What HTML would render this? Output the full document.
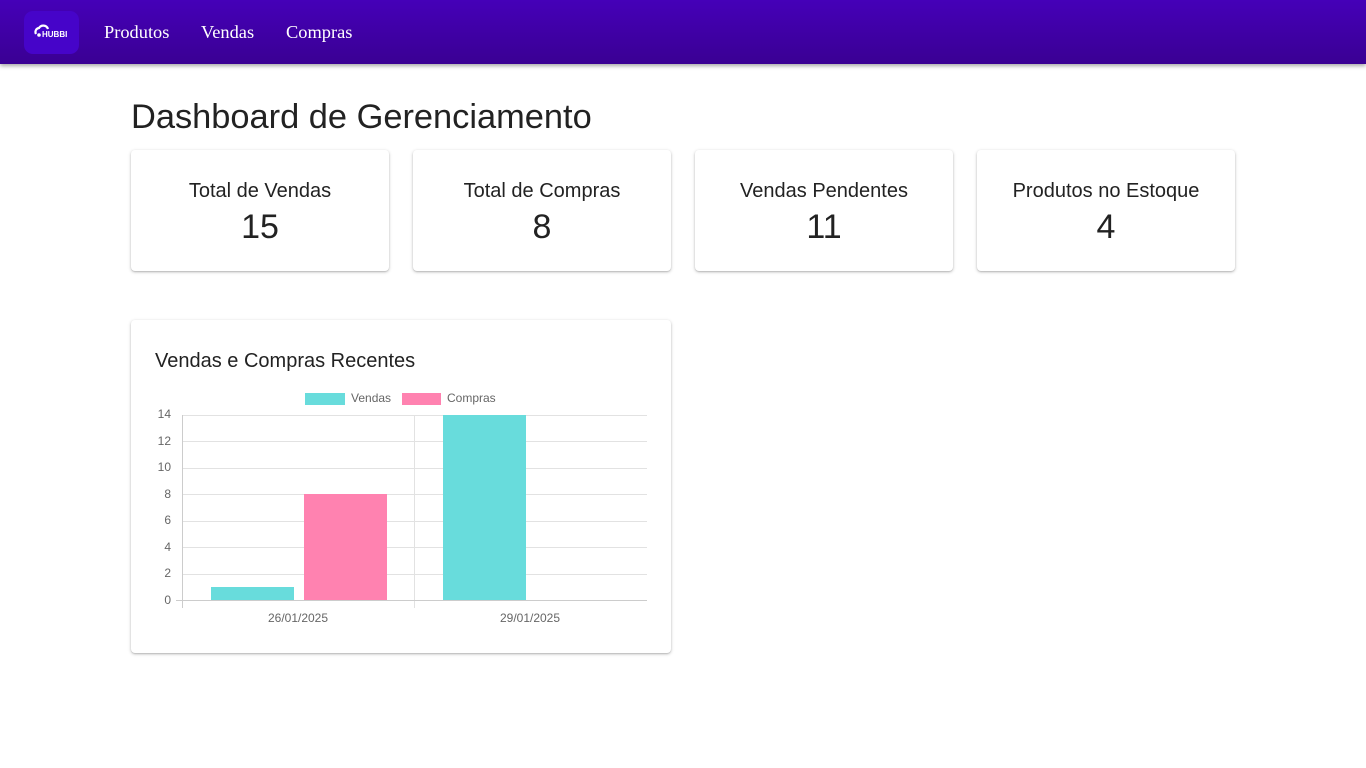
<!DOCTYPE html>
<html><head><meta charset="utf-8"><style>
*{margin:0;padding:0;box-sizing:border-box}
body{width:1366px;height:768px;background:#fff;font-family:"Liberation Sans",sans-serif;position:relative;overflow:hidden;color:#222}
.nav{position:absolute;left:0;top:0;width:1366px;height:64px;background:linear-gradient(#4500b8,#3a0093);box-shadow:0 2px 4px rgba(0,0,0,.35)}
.logo{position:absolute;left:24px;top:11px;width:55px;height:43px;border-radius:9px;background:#4604c9}
.nav a{position:absolute;top:22px;color:#fff;font-family:"Liberation Serif",serif;font-size:18.4px;text-decoration:none}
h1{position:absolute;left:131px;top:98px;font-size:34.4px;font-weight:400;color:#222}
.card{position:absolute;background:#fff;border-radius:4px;box-shadow:0 1px 3px rgba(0,0,0,.25),0 1px 1px rgba(0,0,0,.1)}
.card .t{position:absolute;top:30px;width:100%;text-align:center;font-size:20px}
.card .v{position:absolute;top:58px;width:100%;text-align:center;font-size:34px}
</style></head><body>
<div class="nav">
<div class="logo"><svg width="55" height="43" viewBox="0 0 55 43"><path d="M12 23 a4 4 0 0 1 3-6 a5 5 0 0 1 9 1" stroke="#fff" stroke-width="2.2" fill="none"/><circle cx="15" cy="24" r="1.8" fill="#fff"/><text x="18" y="26" fill="#fff" font-size="8" font-weight="bold" font-family="Liberation Sans">HUBBI</text></svg></div>
<a style="left:104px">Produtos</a><a style="left:201px">Vendas</a><a style="left:286px">Compras</a>
</div>
<h1>Dashboard de Gerenciamento</h1>
<div class="card" style="left:131px;top:150px;width:258px;height:121px"><div class="t">Total de Vendas</div><div class="v">15</div></div>
<div class="card" style="left:413px;top:150px;width:258px;height:121px"><div class="t">Total de Compras</div><div class="v">8</div></div>
<div class="card" style="left:695px;top:150px;width:258px;height:121px"><div class="t">Vendas Pendentes</div><div class="v">11</div></div>
<div class="card" style="left:977px;top:150px;width:258px;height:121px"><div class="t">Produtos no Estoque</div><div class="v">4</div></div>
<div class="card" style="left:131px;top:320px;width:540px;height:333px">
<div style="position:absolute;left:24px;top:30px;font-size:20px">Vendas e Compras Recentes</div>
</div>
<svg style="position:absolute;left:0;top:0" width="1366" height="768" font-family="Liberation Sans" font-size="12" fill="#666">
<g stroke="#e2e2e2" stroke-width="1">
<line x1="182" x2="647" y1="415.5" y2="415.5"/><line x1="182" x2="647" y1="441.5" y2="441.5"/><line x1="182" x2="647" y1="468.5" y2="468.5"/><line x1="182" x2="647" y1="494.5" y2="494.5"/><line x1="182" x2="647" y1="521.5" y2="521.5"/><line x1="182" x2="647" y1="547.5" y2="547.5"/><line x1="182" x2="647" y1="574.5" y2="574.5"/>
<line x1="414.5" x2="414.5" y1="415" y2="608"/>
</g>
<line x1="176" x2="647" y1="600.5" y2="600.5" stroke="#ccc"/>
<line x1="182.5" x2="182.5" y1="415" y2="608" stroke="#ccc"/>
<rect x="211" y="587" width="83" height="13" fill="#68dcdc"/>
<rect x="304" y="494" width="83" height="106" fill="#ff82b0"/>
<rect x="443" y="415" width="83" height="185" fill="#68dcdc"/>
<rect x="305" y="393" width="40" height="12" fill="#68dcdc"/><text x="351" y="402">Vendas</text>
<rect x="402" y="393" width="39" height="12" fill="#ff82b0"/><text x="447" y="402">Compras</text>
<g text-anchor="end"><text x="171" y="418">14</text><text x="171" y="445">12</text><text x="171" y="471">10</text><text x="171" y="498">8</text><text x="171" y="524">6</text><text x="171" y="551">4</text><text x="171" y="577">2</text><text x="171" y="604">0</text></g>
<text x="298" y="622" text-anchor="middle">26/01/2025</text><text x="530" y="622" text-anchor="middle">29/01/2025</text>
</svg>
</body></html>
